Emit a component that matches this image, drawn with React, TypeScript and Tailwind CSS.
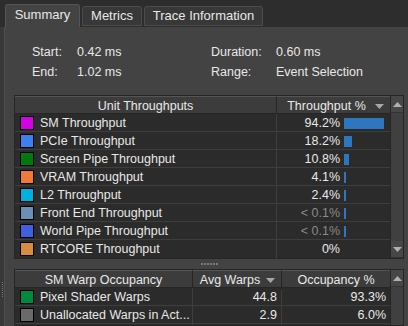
import React from "react";

const font = { fontFamily: '"Liberation Sans", Arial, sans-serif' };

type Row = { name: string; color: string; value: string; pct: number; dim?: boolean };

const units: Row[] = [
  { name: "SM Throughput", color: "#d400e6", value: "94.2%", pct: 94.2 },
  { name: "PCIe Throughput", color: "#3d7ff0", value: "18.2%", pct: 18.2 },
  { name: "Screen Pipe Throughput", color: "#007a0c", value: "10.8%", pct: 10.8 },
  { name: "VRAM Throughput", color: "#f07838", value: "4.1%", pct: 4.1 },
  { name: "L2 Throughput", color: "#00b0e0", value: "2.4%", pct: 2.4 },
  { name: "Front End Throughput", color: "#6a90b8", value: "< 0.1%", pct: 0.1, dim: true },
  { name: "World Pipe Throughput", color: "#4060e0", value: "< 0.1%", pct: 0.1, dim: true },
  { name: "RTCORE Throughput", color: "#d88c40", value: "0%", pct: 0 },
];

const warps = [
  { name: "Pixel Shader Warps", color: "#008a40", avg: "44.8", occ: "93.3%" },
  { name: "Unallocated Warps in Act...", color: "#6a6a6a", avg: "2.9", occ: "6.0%" },
  { name: "", color: "#101010", avg: "", occ: "" },
];

function Swatch({ color }: { color: string }) {
  return <span className="w-[14px] h-[14px] border border-black shrink-0" style={{ background: color }} />;
}

function SortArrow() {
  return (
    <svg width="9" height="5" viewBox="0 0 9 5" className="absolute right-[6px] top-[7px]">
      <path d="M0 0h9L4.5 5z" fill="#a8a8a8" />
    </svg>
  );
}

function ScrollArrow({ down }: { down?: boolean }) {
  return (
    <div className="h-[17px] flex items-center justify-center border-b border-[#333] bg-[#474747]">
      <svg width="9" height="5" viewBox="0 0 9 5">
        <path d={down ? "M0 0h9L4.5 5z" : "M0 5h9L4.5 0z"} fill="#b0b0b0" />
      </svg>
    </div>
  );
}

export default function App() {
  return (
    <div className="w-[408px] h-[326px] bg-[#2d2d2d] overflow-hidden flex flex-col text-[12px] text-[#e8e8e8]" style={font}>
      {/* Tabs */}
      <div className="h-[27px] flex items-end pl-[5px] gap-[2px] shrink-0">
        <div className="h-[23px] w-[75px] bg-[#434343] border border-b-0 border-[#555] rounded-t-[3px] flex items-center justify-center text-[13px] pb-[2px]">
          Summary
        </div>
        <div className="h-[20px] w-[60px] mb-[1px] bg-[#383838] border border-[#4c4c4c] rounded-t-[3px] flex items-center justify-center text-[13px]">
          Metrics
        </div>
        <div className="h-[20px] w-[119px] mb-[1px] bg-[#383838] border border-[#4c4c4c] rounded-t-[3px] flex items-center justify-center text-[13px]">
          Trace Information
        </div>
      </div>

      <div className="flex flex-1 min-h-0">
        {/* left splitter strip */}
        <div className="w-[4px] bg-[#383838] flex items-start pt-[255px] justify-center shrink-0">
          <div className="flex flex-col gap-[1px]">
            {Array.from({ length: 8 }).map((_, i) => (
              <span key={i} className="w-[1px] h-[1px] bg-[#777]" />
            ))}
          </div>
        </div>

        <div className="flex-1 bg-[#434343] border-l border-[#505050] pl-[9px] pr-[4px] flex flex-col min-w-0">
          {/* Summary info */}
          <div className="grid grid-cols-[45px_134px_65px_1fr] pl-[18px] pt-[18px] gap-y-[6px] leading-[14px] text-[12.5px]">
            <span>Start:</span>
            <span>0.42 ms</span>
            <span>Duration:</span>
            <span>0.60 ms</span>
            <span>End:</span>
            <span>1.02 ms</span>
            <span>Range:</span>
            <span>Event Selection</span>
          </div>

          {/* Unit Throughputs table */}
          <div className="mt-[16px] border border-[#262626] flex bg-[#2b2b2b] shrink-0">
            <div className="flex-1 min-w-0">
              <div className="h-[18px] grid grid-cols-[262px_1fr] bg-[#3c3c3c] border-b border-[#262626] text-[12.5px]">
                <div className="flex items-center justify-center border-r border-[#262626] border-t border-t-[#555]">Unit Throughputs</div>
                <div className="relative flex items-center justify-center pr-[14px] border-t border-[#555]">
                  Throughput %
                  <SortArrow />
                </div>
              </div>
              {units.map((r) => (
                <div key={r.name} className="h-[18px] grid grid-cols-[262px_1fr] border-b border-[#3e3e3e] last:border-b-0 text-[12.5px]">
                  <div className="flex items-center gap-[6px] pl-[5px] border-r border-[#3e3e3e]">
                    <Swatch color={r.color} />
                    <span>{r.name}</span>
                  </div>
                  <div className="flex items-center">
                    <span className={`w-[63px] text-right ${r.dim ? "text-[#8a8a8a]" : ""}`}>{r.value}</span>
                    <span className="ml-[4px] h-[11px] bg-[#2f76c0]" style={{ width: r.pct === 0 ? 0 : Math.max(2, Math.round((r.pct / 94.2) * 40)) }} />
                  </div>
                </div>
              ))}
            </div>
            <div className="w-[13px] border-l border-[#262626] bg-[#404040] flex flex-col justify-between">
              <ScrollArrow />
              <ScrollArrow down />
            </div>
          </div>

          {/* splitter */}
          <div className="h-[10px] flex items-center justify-center gap-[1px] shrink-0">
            {Array.from({ length: 6 }).map((_, i) => (
              <span key={i} className="w-[2px] h-[2px] bg-[#7a7a7a]" />
            ))}
          </div>

          {/* SM Warp Occupancy table */}
          <div className="border border-[#262626] flex bg-[#2b2b2b] flex-1 min-h-0 overflow-hidden">
            <div className="flex-1 min-w-0">
              <div className="h-[18px] grid grid-cols-[178px_89px_1fr] bg-[#3c3c3c] border-b border-[#262626] text-[12.5px]">
                <div className="flex items-center justify-center border-r border-[#262626] border-t border-t-[#555]">SM Warp Occupancy</div>
                <div className="relative flex items-center justify-center pr-[14px] border-r border-[#262626] border-t border-t-[#555]">
                  Avg Warps
                  <SortArrow />
                </div>
                <div className="flex items-center justify-center border-t border-[#555]">Occupancy %</div>
              </div>
              {warps.map((r, i) => (
                <div key={i} className="h-[18px] grid grid-cols-[178px_89px_1fr] border-b border-[#3e3e3e] text-[12.5px]">
                  <div className="flex items-center gap-[6px] pl-[5px] border-r border-[#3e3e3e]">
                    <Swatch color={r.color} />
                    <span>{r.name}</span>
                  </div>
                  <div className="flex items-center justify-end pr-[4px] border-r border-[#3e3e3e]">{r.avg}</div>
                  <div className="flex items-center justify-end pr-[4px]">{r.occ}</div>
                </div>
              ))}
            </div>
            <div className="w-[13px] border-l border-[#262626] bg-[#404040] flex flex-col">
              <ScrollArrow />
            </div>
          </div>
        </div>
      </div>
    </div>
  );
}
